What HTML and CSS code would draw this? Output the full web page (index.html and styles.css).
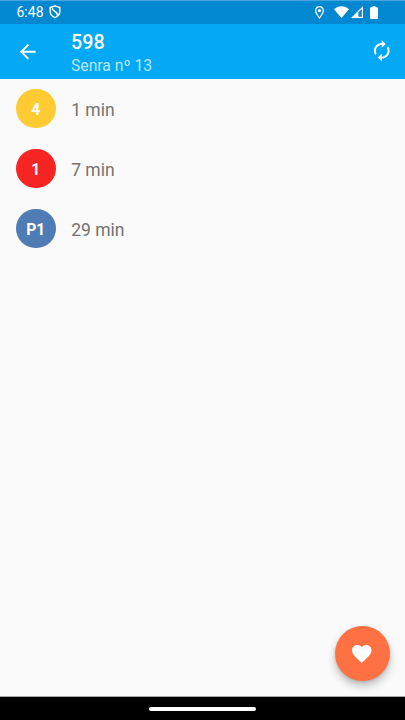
FILE: index.html
```
<!DOCTYPE html>
<html lang="gl">
<head>
<meta charset="utf-8">
<title>598</title>
<link rel="stylesheet" href="styles.css">
</head>
<body>
<div class="screen">
  <div class="status">
    <span class="clock">6:48</span>
    <svg class="shield" viewBox="0 0 12 14" fill="none" stroke="#fff" stroke-width="1.5"><path d="M6 .9 11 2.7V6.6C11 9.7 9 12.1 6 13.1 3 12.1 1 9.7 1 6.6V2.7Z"/><path d="M3 2.5C3 7.500 9 6 8.600 11.200"/></svg>
    <span class="spacer"></span>
    <svg class="pin" viewBox="5 2 14 20" fill="#fff"><path d="M12 2C8.100 2 5 5.100 5 9c0 5.200 7 13 7 13s7-7.800 7-13c0-3.900-3.100-7-7-7zM7 9c0-2.800 2.200-5 5-5s5 2.200 5 5c0 2.900-2.900 7.200-5 9.900C9.900 16.200 7 11.900 7 9z"/><circle cx="12" cy="9" r="2.500"/></svg>
    <svg class="wifi" viewBox="0 0 15 12" fill="#fff"><path d="M0 3.200C4.200-.9 10.800-.9 15 3.200L7.500 12Z"/></svg>
    <svg class="signal" viewBox="0 0 12 12"><path d="M0 12 12 0V12ZM7.400 10.800H10.800V2.900L7.400 6.300Z" fill="#fff" fill-rule="evenodd"/></svg>
    <svg class="battery" viewBox="0 0 8 13" fill="#fff"><path d="M2.500 0h3v1.300h1.300Q8 1.300 8 2.500v9.300Q8 13 6.800 13H1.200Q0 13 0 11.800V2.500Q0 1.300 1.200 1.300h1.300Z"/></svg>
  </div>
  <header class="toolbar">
    <svg class="icon" viewBox="0 0 24 24" fill="#fff"><path d="M20 11H7.830l5.590-5.590L12 4l-8 8 8 8 1.410-1.410L7.830 13H20v-2z"/></svg>
    <div class="titles">
      <h1>598</h1>
      <p>Senra nº 13</p>
    </div>
    <svg class="icon refresh" viewBox="0 0 24 24" fill="#fff"><path d="M12 6v3l4-4-4-4v3c-4.420 0-8 3.580-8 8 0 1.570.46 3.030 1.240 4.260L6.700 14.800c-.45-.83-.7-1.790-.7-2.800 0-3.310 2.690-6 6-6zm6.760 1.740L17.300 9.200c.44.84.7 1.790.7 2.800 0 3.310-2.690 6-6 6v-3l-4 4 4 4v-3c4.420 0 8-3.580 8-8 0-1.570-.46-3.030-1.240-4.260z"/></svg>
  </header>
  <main class="list">
    <div class="row"><span class="line yellow">4</span><span class="time">1 min</span></div>
    <div class="row"><span class="line red">1</span><span class="time">7 min</span></div>
    <div class="row"><span class="line blue">P1</span><span class="time">29 min</span></div>
    <button class="fab" aria-label="Favorito"><svg class="icon" viewBox="0 0 24 24" fill="#fff"><path d="M12 21.350l-1.450-1.320C5.400 15.360 2 12.280 2 8.500 2 5.420 4.420 3 7.500 3c1.740 0 3.410.81 4.500 2.090C13.090 3.810 14.760 3 16.500 3 19.580 3 22 5.420 22 8.500c0 3.780-3.400 6.860-8.550 11.540L12 21.350z"/></svg></button>
  </main>
  <footer class="nav"><span class="handle"></span></footer>
</div>
</body>
</html>
```
FILE: styles.css
```
* { box-sizing: border-box; }
body { margin: 0; font-family: Roboto, "Liberation Sans", sans-serif; }
h1, p { margin: 0; }
svg { display: block; flex: none; }
.screen { width: 405px; height: 720px; display: flex; flex-direction: column; background: #fafafa; overflow: hidden; }
.status { height: 24px; flex: none; display: flex; align-items: center; padding: 0 27.500px 1px 16.500px; background: #0288d1; border-top: 1px solid #45a5dc; color: #fff; }
.clock { width: 27px; font-size: 14px; line-height: 22px; white-space: nowrap; }
.shield { width: 12px; height: 13.500px; margin-left: 5px; }
.spacer { flex: 1; }
.pin { width: 9px; height: 13px; margin-right: 10px; }
.wifi { width: 15px; height: 12px; margin-right: 1.500px; }
.signal { width: 12px; height: 12px; margin-right: 7px; }
.battery { width: 8px; height: 13px; }
.toolbar { height: 55px; flex: none; display: flex; align-items: center; padding: 0 12px 0 16px; background: #03a9f4; color: #fff; }
.icon { width: 23.500px; height: 23.500px; }
.refresh { margin-bottom: 1px; }
.titles { flex: 1; padding: 4px 0 0 31.500px; }
h1 { font-size: 19.700px; line-height: 24px; font-weight: 500; }
.titles p { font-size: 15.700px; line-height: 22px; color: #b8e5fc; }
.list { flex: 1; position: relative; }
.row { height: 60px; display: flex; align-items: center; padding-left: 16px; }
.line { width: 39.500px; height: 39.500px; margin-bottom: 1px; border-radius: 50%; display: flex; align-items: center; justify-content: center; padding-top: 1px; color: #fff; font-size: 15.700px; font-weight: 700; }
.yellow { background: #ffcb33; }
.red { background: #f62422; }
.blue { background: #507cb5; }
.time { margin-left: 15.700px; padding-top: 1px; font-size: 17.500px; line-height: 22px; color: #737373; }
.fab { position: absolute; right: 15.500px; bottom: 15px; width: 55px; height: 55px; padding: 0; border: 0; border-radius: 50%; background: #ff7043; display: flex; align-items: center; justify-content: center; box-shadow: 0 5px 9px rgba(0,0,0,.24), 0 1px 3px rgba(0,0,0,.12); }
.nav { height: 24px; flex: none; display: flex; align-items: center; justify-content: center; background: #000; border-top: 1px solid #a5a5a5; }
.handle { width: 107px; height: 4px; border-radius: 2px; background: #fff; }
```
